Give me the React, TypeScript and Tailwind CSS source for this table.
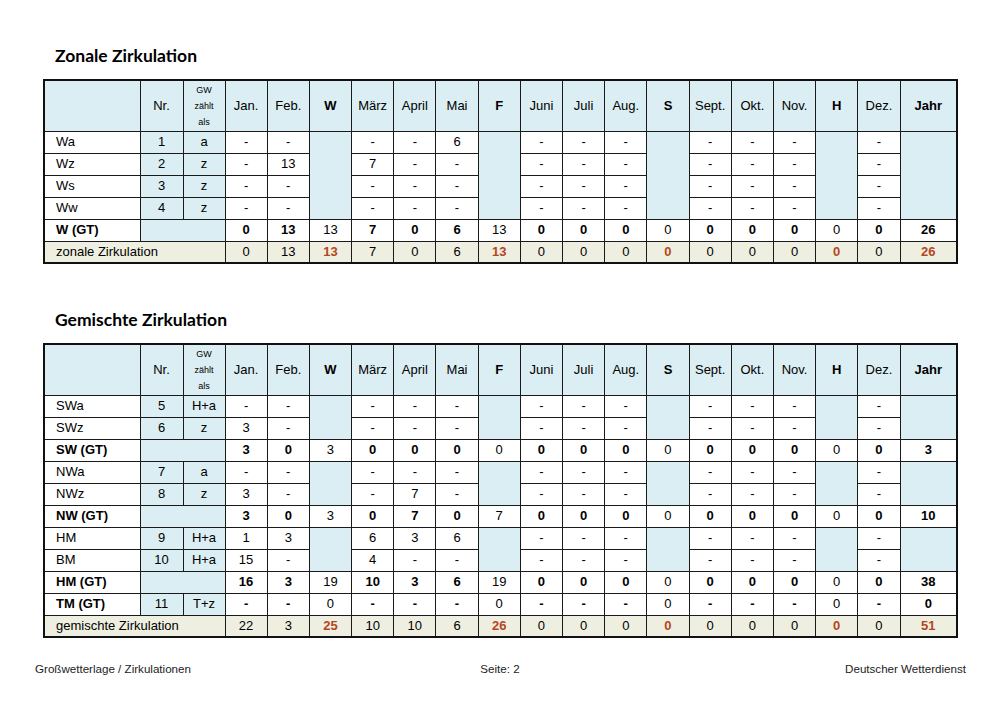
import React from "react";

type Detail = { name: string; nr: string; gw: string; months: string[] };
type Total = { name: string; nr?: string; gw?: string; values: string[] };
type Group = { details: Detail[]; total?: Total };

const HEADERS = ["Jan.", "Feb.", "W", "März", "April", "Mai", "F", "Juni", "Juli", "Aug.", "S", "Sept.", "Okt.", "Nov.", "H", "Dez.", "Jahr"];
const SEASONS = [2, 6, 10, 14, 16];

const cell = "border border-[#1a1a1a] text-center align-middle";
const blue = "bg-[#dbeef3]";
const beige = "bg-[#eeefe1]";

const dashes = (n: number) => Array.from({ length: n }, () => "-");

const zonal: Group[] = [
  {
    details: [
      { name: "Wa", nr: "1", gw: "a", months: ["-", "-", "-", "-", "6", "-", "-", "-", "-", "-", "-", "-"] },
      { name: "Wz", nr: "2", gw: "z", months: ["-", "13", "7", "-", "-", "-", "-", "-", "-", "-", "-", "-"] },
      { name: "Ws", nr: "3", gw: "z", months: dashes(12) },
      { name: "Ww", nr: "4", gw: "z", months: dashes(12) },
    ],
    total: { name: "W (GT)", values: ["0", "13", "13", "7", "0", "6", "13", "0", "0", "0", "0", "0", "0", "0", "0", "0", "26"] },
  },
];

const mixed: Group[] = [
  {
    details: [
      { name: "SWa", nr: "5", gw: "H+a", months: dashes(12) },
      { name: "SWz", nr: "6", gw: "z", months: ["3", ...dashes(11)] },
    ],
    total: { name: "SW (GT)", values: ["3", "0", "3", "0", "0", "0", "0", "0", "0", "0", "0", "0", "0", "0", "0", "0", "3"] },
  },
  {
    details: [
      { name: "NWa", nr: "7", gw: "a", months: dashes(12) },
      { name: "NWz", nr: "8", gw: "z", months: ["3", "-", "-", "7", ...dashes(8)] },
    ],
    total: { name: "NW (GT)", values: ["3", "0", "3", "0", "7", "0", "7", "0", "0", "0", "0", "0", "0", "0", "0", "0", "10"] },
  },
  {
    details: [
      { name: "HM", nr: "9", gw: "H+a", months: ["1", "3", "6", "3", "6", ...dashes(7)] },
      { name: "BM", nr: "10", gw: "H+a", months: ["15", "-", "4", "-", "-", ...dashes(7)] },
    ],
    total: { name: "HM (GT)", values: ["16", "3", "19", "10", "3", "6", "19", "0", "0", "0", "0", "0", "0", "0", "0", "0", "38"] },
  },
  {
    details: [],
    total: { name: "TM (GT)", nr: "11", gw: "T+z", values: ["-", "-", "0", "-", "-", "-", "0", "-", "-", "-", "0", "-", "-", "-", "0", "-", "0"] },
  },
];

const DetailRow = ({ d, first, span }: { d: Detail; first: boolean; span: number }) => {
  const cells: React.ReactNode[] = [];
  let m = 0;
  HEADERS.forEach((_, i) => {
    if (SEASONS.includes(i)) {
      if (first) cells.push(<td key={i} rowSpan={span} className={`${cell} ${blue}`} />);
    } else {
      cells.push(<td key={i} className={cell}>{d.months[m++]}</td>);
    }
  });
  return (
    <tr className="h-[22px]">
      <td className={`${cell} text-left pl-[11px]`}>{d.name}</td>
      <td className={`${cell} ${blue}`}>{d.nr}</td>
      <td className={`${cell} ${blue}`}>{d.gw}</td>
      {cells}
    </tr>
  );
};

const TotalRow = ({ t }: { t: Total }) => (
  <tr className="h-[22px]">
    <td className={`${cell} text-left pl-[11px] font-bold`}>{t.name}</td>
    {t.nr ? (
      <>
        <td className={`${cell} ${blue}`}>{t.nr}</td>
        <td className={`${cell} ${blue}`}>{t.gw}</td>
      </>
    ) : (
      <td colSpan={2} className={`${cell} ${blue}`} />
    )}
    {t.values.map((v, i) => (
      <td key={i} className={`${cell} ${SEASONS.includes(i) && i !== 16 ? "font-normal" : "font-bold"}`}>{v}</td>
    ))}
  </tr>
);

const SumRow = ({ name, values }: { name: string; values: string[] }) => (
  <tr className={`h-[22px] ${beige}`}>
    <td colSpan={3} className={`${cell} text-left pl-[11px]`}>{name}</td>
    {values.map((v, i) => (
      <td key={i} className={`${cell} ${SEASONS.includes(i) ? "font-bold text-[#b5461d]" : ""}`}>{v}</td>
    ))}
  </tr>
);

const CircTable = ({ groups, sumName, sum }: { groups: Group[]; sumName: string; sum: string[] }) => (
  <table className="table-fixed border-collapse border-2 border-[#111] w-[913px] text-[13px] leading-[16px] text-black font-['Liberation_Sans',Arial,sans-serif]">
    <colgroup>
      <col className="w-[96px]" />
      <col className="w-[43px]" />
      <col className="w-[42px]" />
      {HEADERS.map((h, i) => (
        <col key={h} className={i === 16 ? "w-[57px]" : "w-[42.2px]"} />
      ))}
    </colgroup>
    <thead>
      <tr className={`h-[51px] ${blue}`}>
        <th className={cell} />
        <th className={`${cell} font-normal`}>Nr.</th>
        <th className={`${cell} font-normal text-[9px] leading-[16px]`}>
          GW
          <br />
          zählt
          <br />
          als
        </th>
        {HEADERS.map((h, i) => (
          <th key={h} className={`${cell} ${SEASONS.includes(i) ? "font-bold" : "font-normal"}`}>{h}</th>
        ))}
      </tr>
    </thead>
    <tbody>
      {groups.map((g, gi) => (
        <React.Fragment key={gi}>
          {g.details.map((d, di) => (
            <DetailRow key={d.name} d={d} first={di === 0} span={g.details.length} />
          ))}
          {g.total && <TotalRow t={g.total} />}
        </React.Fragment>
      ))}
      <SumRow name={sumName} values={sum} />
    </tbody>
  </table>
);

const Heading = ({ children }: { children: React.ReactNode }) => (
  <h2 className="pl-[12px] text-[17.5px] leading-[24px] font-bold text-black font-['Lato',sans-serif]">{children}</h2>
);

export default function App() {
  return (
    <div className="w-[1000px] h-[706px] bg-white pl-[43px] pt-[44px] overflow-hidden">
      <Heading>Zonale Zirkulation</Heading>
      <div className="mt-[11px]">
        <CircTable
          groups={zonal}
          sumName="zonale Zirkulation"
          sum={["0", "13", "13", "7", "0", "6", "13", "0", "0", "0", "0", "0", "0", "0", "0", "0", "26"]}
        />
      </div>
      <div className="mt-[44px]">
        <Heading>Gemischte Zirkulation</Heading>
      </div>
      <div className="mt-[11px]">
        <CircTable
          groups={mixed}
          sumName="gemischte Zirkulation"
          sum={["22", "3", "25", "10", "10", "6", "26", "0", "0", "0", "0", "0", "0", "0", "0", "0", "51"]}
        />
      </div>
      <div className="flex justify-between items-center -ml-[8px] w-[931px] mt-[23px] text-[11.6px] leading-[16px] text-[#222] font-['Liberation_Sans',Arial,sans-serif]">
        <span>Großwetterlage / Zirkulationen</span>
        <span className="-ml-[36px]">Seite: 2</span>
        <span>Deutscher Wetterdienst</span>
      </div>
    </div>
  );
}
